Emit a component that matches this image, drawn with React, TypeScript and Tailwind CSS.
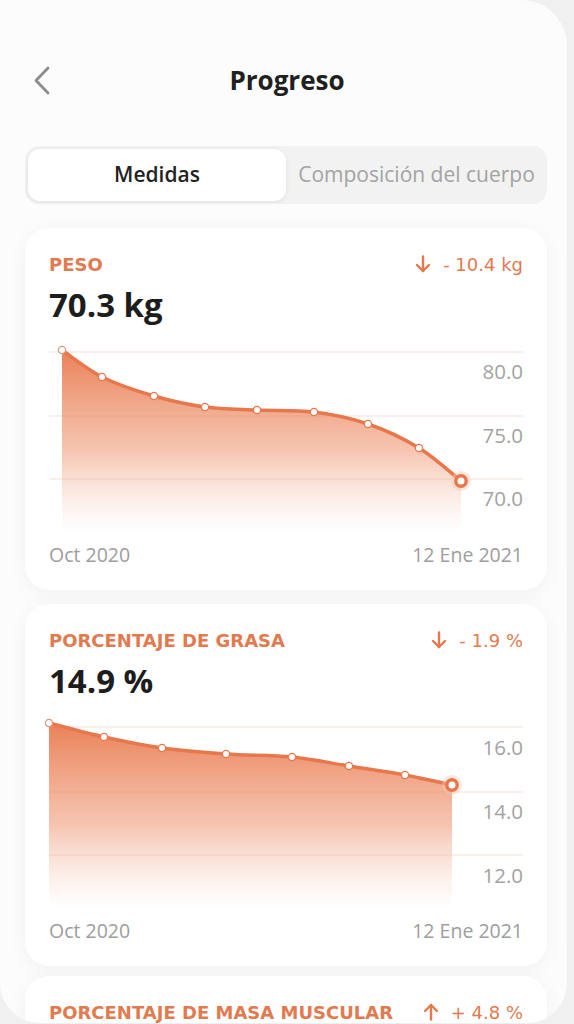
import React from 'react'

type Pt = [number, number]

const ORANGE = '#e8774b'
const FONT = "'Open Sans', 'Noto Sans', sans-serif"
const WIDE = "'DejaVu Sans', 'Open Sans', sans-serif"

// catmull-rom -> cubic bezier, for the smooth chart line
function smoothPath(pts: Pt[]) {
  let d = `M ${pts[0][0]} ${pts[0][1]}`
  for (let i = 0; i < pts.length - 1; i++) {
    const p0 = pts[i - 1] || pts[i]
    const p1 = pts[i]
    const p2 = pts[i + 1]
    const p3 = pts[i + 2] || p2
    const c1x = p1[0] + (p2[0] - p0[0]) / 6
    const c1y = p1[1] + (p2[1] - p0[1]) / 6
    const c2x = p2[0] - (p3[0] - p1[0]) / 6
    const c2y = p2[1] - (p3[1] - p1[1]) / 6
    d += ` C ${c1x} ${c1y} ${c2x} ${c2y} ${p2[0]} ${p2[1]}`
  }
  return d
}

interface ChartProps {
  id: string
  points: Pt[]
  grid: number[]
  labels: { y: number; text: string }[]
  bottom: number
}

function Chart({ id, points, grid, labels, bottom }: ChartProps) {
  const line = smoothPath(points)
  const first = points[0]
  const last = points[points.length - 1]
  const area = `${line} L ${last[0]} ${bottom} L ${first[0]} ${bottom} Z`
  return (
    <svg width="474" height="195" viewBox="0 0 474 195" className="block overflow-visible">
      <defs>
        <linearGradient id={id} x1="0" y1="0" x2="0" y2="1">
          <stop offset="0" stopColor="#e97a4e" stopOpacity="0.95" />
          <stop offset="0.55" stopColor="#ee946f" stopOpacity="0.55" />
          <stop offset="1" stopColor="#f6c2aa" stopOpacity="0" />
        </linearGradient>
      </defs>
      {grid.map((y) => (
        <line key={y} x1="0" x2="474" y1={y} y2={y} stroke="#f3e2d8" strokeWidth="1.2" />
      ))}
      <path d={area} fill={`url(#${id})`} />
      <path d={line} fill="none" stroke={ORANGE} strokeWidth="3.5" strokeLinecap="round" />
      {points.slice(0, -1).map(([x, y], i) => (
        <circle key={i} cx={x} cy={y} r="3.6" fill="#fff" stroke={i === 0 ? '#d99a80' : ORANGE} strokeWidth="1.3" />
      ))}
      <circle cx={last[0]} cy={last[1]} r="10" fill="#f6c9b6" opacity="0.45" />
      <circle cx={last[0]} cy={last[1]} r="5.2" fill="#fff" stroke={ORANGE} strokeWidth="3.4" />
      {labels.map((l) => (
        <text key={l.text} x="474" y={l.y} textAnchor="end" fill="#a3a3a3" fontSize="20.5" fontFamily={FONT}>
          {l.text}
        </text>
      ))}
    </svg>
  )
}

function ArrowIcon({ up = false }: { up?: boolean }) {
  return (
    <svg width="16" height="18" viewBox="0 0 16 18" fill="none" className={up ? 'rotate-180' : ''}>
      <path d="M8 1.5 V16" stroke={ORANGE} strokeWidth="2.4" strokeLinecap="round" />
      <path d="M2 10 L8 16 L14 10" stroke={ORANGE} strokeWidth="2.4" strokeLinecap="round" strokeLinejoin="round" />
    </svg>
  )
}

interface CardProps {
  id: string
  title: string
  delta: string
  up?: boolean
  value?: string
  chart?: Omit<ChartProps, 'id'>
}

function MetricCard({ id, title, delta, up, value, chart }: CardProps) {
  return (
    <div className="bg-white rounded-[24px] shadow-[0_4px_22px_rgba(0,0,0,0.045)] px-6 pt-6 pb-[23px]">
      <div className="flex items-center justify-between h-6" style={{ fontFamily: WIDE }}>
        <span className="text-[18px] font-bold text-[#e27a4f]">{title}</span>
        <span className="flex items-center gap-[12px] text-[18px] text-[#e27a4f]">
          <ArrowIcon up={up} />
          {delta}
        </span>
      </div>
      {value && chart && (
        <>
          <div className="mt-[11px] h-9 leading-9 text-[33px] font-bold text-[#1d1d1d]">{value}</div>
          <div className="mt-[17px]">
            <Chart id={id} {...chart} />
          </div>
          <div className="mt-2 flex justify-between text-[19.5px] leading-6 text-[#9d9d9d]">
            <span>Oct 2020</span>
            <span>12 Ene 2021</span>
          </div>
        </>
      )}
    </div>
  )
}

export default function App() {
  return (
    <div className="h-[1024px] w-[574px] bg-[#f0f0f0] overflow-hidden" style={{ fontFamily: FONT }}>
      <div className="h-[1023px] w-[567px] bg-[#fcfcfc] rounded-tr-[46px] rounded-b-[40px] overflow-hidden">
        {/* header */}
        <div className="relative h-[140px] flex items-end justify-center pb-[44px] pl-[7px]">
          <svg width="20" height="32" viewBox="0 0 20 32" className="absolute left-[32px] top-[65px]">
            <path d="M16 3 L4 15.5 L16 28" fill="none" stroke="#8c8c8c" strokeWidth="2.8" strokeLinecap="round" strokeLinejoin="round" />
          </svg>
          <h1 className="text-[26px] font-bold text-[#202020] leading-8">Progreso</h1>
        </div>

        {/* tabs */}
        <div className="ml-[25px] mr-[20px] mt-[6px] h-[58px] rounded-[14px] bg-[#f2f2f2] p-[3px] pr-0 flex">
          <div className="w-[258px] h-full bg-white rounded-[12px] shadow-[0_1px_4px_rgba(0,0,0,0.08)] flex items-center justify-center text-[21px] font-semibold text-[#222]">
            Medidas
          </div>
          <div className="flex-1 flex items-center justify-center text-[21px] text-[#a3a3a3]">
            Composición del cuerpo
          </div>
        </div>

        <div className="ml-[25px] mr-[20px] mt-[24px] flex flex-col gap-[14px]">
          <MetricCard
            id="peso"
            title="PESO"
            delta="- 10.4 kg"
            value="70.3 kg"
            chart={{
              points: [
                [13, 10],
                [53, 37],
                [105, 56],
                [156, 67],
                [208, 70],
                [265, 72],
                [319, 84],
                [370, 108],
                [412, 141],
              ],
              grid: [12, 76, 139],
              labels: [
                { y: 39, text: '80.0' },
                { y: 103, text: '75.0' },
                { y: 166, text: '70.0' },
              ],
              bottom: 192,
            }}
          />
          <MetricCard
            id="grasa"
            title="PORCENTAJE DE GRASA"
            delta="- 1.9 %"
            value="14.9 %"
            chart={{
              points: [
                [0, 7],
                [55, 21],
                [113, 32],
                [177, 38],
                [243, 41],
                [300, 50],
                [356, 59],
                [403, 69],
              ],
              grid: [11, 76, 139],
              labels: [
                { y: 39, text: '16.0' },
                { y: 103, text: '14.0' },
                { y: 167, text: '12.0' },
              ],
              bottom: 192,
            }}
          />
          {/* only the header of the third card is on screen */}
          <div className="-mt-[4px]">
            <MetricCard id="masa" title="PORCENTAJE DE MASA MUSCULAR" delta="+ 4.8 %" up />
          </div>
        </div>
      </div>
    </div>
  )
}
